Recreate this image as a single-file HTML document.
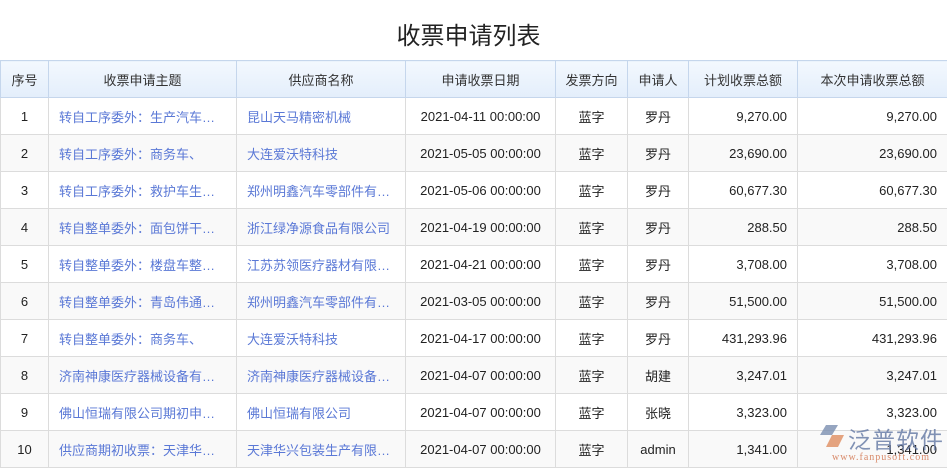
<!DOCTYPE html>
<html><head><meta charset="utf-8">
<style>
body{margin:0;width:947px;height:469px;overflow:hidden;background:#fff;font-family:"Liberation Sans","Noto Sans CJK SC",sans-serif;position:relative}
h1{margin:0;position:absolute;top:16px;left:0;width:937px;text-align:center;font-size:24px;font-weight:normal;color:#222}
table{position:absolute;top:60px;left:0;border-collapse:collapse;table-layout:fixed;width:947px;font-size:13px;color:#222}
th,td{border:1px solid #dcdcdc;height:36px;padding:0 10px;white-space:nowrap;overflow:hidden;text-overflow:ellipsis}
th{background:linear-gradient(#f3f8fe,#e3eefb);border-color:#c5d6ec;font-weight:normal;color:#333;text-align:center;padding:0 3px}
tr:nth-child(odd) td{background:#f9f9f9}
td.c{text-align:center}td.r{text-align:right}
td.l{color:#5a78d6}
.wm{position:absolute;left:818px;top:421px;width:130px;height:48px}
</style></head><body>
<h1>收票申请列表</h1>
<table>
<colgroup><col style="width:48px"><col style="width:188px"><col style="width:169px"><col style="width:150px"><col style="width:72px"><col style="width:61px"><col style="width:109px"><col style="width:150px"></colgroup>
<tr><th>序号</th><th>收票申请主题</th><th>供应商名称</th><th>申请收票日期</th><th>发票方向</th><th>申请人</th><th>计划收票总额</th><th>本次申请收票总额</th></tr>
<tr><td class="c">1</td><td class="l">转自工序委外：生产汽车零件</td><td class="l">昆山天马精密机械</td><td class="c">2021-04-11 00:00:00</td><td class="c">蓝字</td><td class="c">罗丹</td><td class="r">9,270.00</td><td class="r">9,270.00</td></tr>
<tr><td class="c">2</td><td class="l">转自工序委外：商务车、</td><td class="l">大连爱沃特科技</td><td class="c">2021-05-05 00:00:00</td><td class="c">蓝字</td><td class="c">罗丹</td><td class="r">23,690.00</td><td class="r">23,690.00</td></tr>
<tr><td class="c">3</td><td class="l">转自工序委外：救护车生产线</td><td class="l">郑州明鑫汽车零部件有限公司</td><td class="c">2021-05-06 00:00:00</td><td class="c">蓝字</td><td class="c">罗丹</td><td class="r">60,677.30</td><td class="r">60,677.30</td></tr>
<tr><td class="c">4</td><td class="l">转自整单委外：面包饼干生产</td><td class="l">浙江绿净源食品有限公司</td><td class="c">2021-04-19 00:00:00</td><td class="c">蓝字</td><td class="c">罗丹</td><td class="r">288.50</td><td class="r">288.50</td></tr>
<tr><td class="c">5</td><td class="l">转自整单委外：楼盘车整体生产</td><td class="l">江苏苏领医疗器材有限公司</td><td class="c">2021-04-21 00:00:00</td><td class="c">蓝字</td><td class="c">罗丹</td><td class="r">3,708.00</td><td class="r">3,708.00</td></tr>
<tr><td class="c">6</td><td class="l">转自整单委外：青岛伟通科技</td><td class="l">郑州明鑫汽车零部件有限公司</td><td class="c">2021-03-05 00:00:00</td><td class="c">蓝字</td><td class="c">罗丹</td><td class="r">51,500.00</td><td class="r">51,500.00</td></tr>
<tr><td class="c">7</td><td class="l">转自整单委外：商务车、</td><td class="l">大连爱沃特科技</td><td class="c">2021-04-17 00:00:00</td><td class="c">蓝字</td><td class="c">罗丹</td><td class="r">431,293.96</td><td class="r">431,293.96</td></tr>
<tr><td class="c">8</td><td class="l">济南神康医疗器械设备有限公司</td><td class="l">济南神康医疗器械设备有限公司</td><td class="c">2021-04-07 00:00:00</td><td class="c">蓝字</td><td class="c">胡建</td><td class="r">3,247.01</td><td class="r">3,247.01</td></tr>
<tr><td class="c">9</td><td class="l">佛山恒瑞有限公司期初申请收票</td><td class="l">佛山恒瑞有限公司</td><td class="c">2021-04-07 00:00:00</td><td class="c">蓝字</td><td class="c">张晓</td><td class="r">3,323.00</td><td class="r">3,323.00</td></tr>
<tr><td class="c">10</td><td class="l">供应商期初收票：天津华兴包装</td><td class="l">天津华兴包装生产有限公司</td><td class="c">2021-04-07 00:00:00</td><td class="c">蓝字</td><td class="c">admin</td><td class="r">1,341.00</td><td class="r">1,341.00</td></tr>
</table>
<div class="wm">
<svg width="30" height="28" style="position:absolute;left:0;top:2px" viewBox="0 0 30 28"><path d="M8 2 L20 2 L14 12 L2 12 Z" fill="#7a8fb0" opacity=".8"/><path d="M14 12 L26 12 L20 24 L8 24 Z" fill="#e0946a" opacity=".85"/></svg>
<div style="position:absolute;left:30px;top:0;font-size:23px;color:#6c7fa8;opacity:.85;letter-spacing:1px">泛普软件</div>
<div style="position:absolute;left:14px;top:31px;font-size:10px;color:#d88a6a;font-family:'Liberation Serif',serif;letter-spacing:1px">www.fanpusoft.com</div>
</div>
</body></html>
